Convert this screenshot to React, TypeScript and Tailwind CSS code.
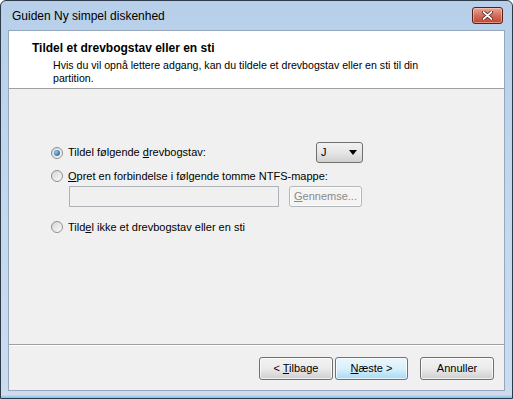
import React from 'react';

const FONT = { fontFamily: '"Liberation Sans", Arial, sans-serif' };

function Radio({ checked }: { checked?: boolean }) {
  return (
    <span className="relative flex h-[12px] w-[12px] shrink-0 items-center justify-center rounded-full border border-[#8e8f8f] bg-gradient-to-br from-[#d6d6d6] to-[#fbfbfb]">
      {checked && (
        <span className="h-[6px] w-[6px] rounded-full bg-[radial-gradient(circle_at_35%_35%,#8cc8ee,#164f80)]" />
      )}
    </span>
  );
}

function WinButton({ children, primary, disabled, className = '' }: { children: React.ReactNode; primary?: boolean; disabled?: boolean; className?: string }) {
  const tone = disabled
    ? 'border-[#b4b7ba] bg-[#f4f4f4] text-[#8a8a8a]'
    : primary
      ? 'border-[#3c7fb1] bg-gradient-to-b from-[#eaf6fd] via-[#d9f0fc] to-[#a7d9f5] text-black'
      : 'border-[#707070] bg-gradient-to-b from-[#f2f2f2] via-[#ebebeb] to-[#cfcfcf] text-black';
  return (
    <div className={`flex h-[23px] items-center justify-center rounded-[3px] border text-[11px] shadow-[inset_0_0_0_1px_rgba(255,255,255,0.7)] ${tone} ${className}`}>
      {children}
    </div>
  );
}

export default function App() {
  return (
    <div style={FONT} className="flex h-[399px] w-[513px] flex-col overflow-hidden rounded-t-[6px] border border-[#2d3a4a] bg-gradient-to-b from-[#b7cfe9] via-[#c3d8ee] to-[#cbdcf0]">
      {/* Title bar */}
      <div className="flex h-[29px] shrink-0 items-center justify-between pl-[11px] pr-[9px]">
        <span className="text-[12px] text-black">Guiden Ny simpel diskenhed</span>
        <div className="flex h-[17px] w-[31px] items-center justify-center rounded-[3px] border border-[#5a1f1a] bg-gradient-to-b from-[#e9a797] via-[#d36d5c] to-[#c2452f] shadow-[inset_0_0_0_1px_rgba(255,220,210,0.5)]">
          <svg width="11" height="9" viewBox="0 0 11 9">
            <path d="M1.5 1 L9.5 8 M9.5 1 L1.5 8" stroke="#4a1a14" strokeWidth="3.2" strokeLinecap="round" />
            <path d="M1.5 1 L9.5 8 M9.5 1 L1.5 8" stroke="#ffffff" strokeWidth="1.7" strokeLinecap="round" />
          </svg>
        </div>
      </div>

      {/* Client area */}
      <div className="mx-[7px] flex flex-1 flex-col border border-[#97a8bd] bg-[#f0f0f0]">
        {/* Header */}
        <div className="flex h-[58px] shrink-0 flex-col border-b border-[#a0a0a0] bg-white pl-[23px] pt-[10px] text-black">
          <div className="text-[12px] font-bold leading-[14px]">Tildel et drevbogstav eller en sti</div>
          <div className="mt-[4px] pl-[21px] text-[10.6px] leading-[13px]">
            Hvis du vil opnå lettere adgang, kan du tildele et drevbogstav eller en sti til din
            <br />
            partition.
          </div>
        </div>

        {/* Body */}
        <div className="flex flex-1 flex-col pl-[42px] pt-[53px] text-[11px] text-black">
          <div className="flex h-[21px] items-center">
            <Radio checked />
            <span className="ml-[5px] w-[248px]">
              Tildel følgende <u>d</u>revbogstav:
            </span>
            <div className="flex h-[21px] w-[47px] items-center justify-between rounded-[3px] border border-[#707070] bg-gradient-to-b from-[#f2f2f2] via-[#e6e6e6] to-[#d0d0d0] pl-[4px] pr-[5px]">
              <span>J</span>
              <svg width="8" height="5" viewBox="0 0 8 5">
                <path d="M0 0 H8 L4 5 Z" fill="#000" />
              </svg>
            </div>
          </div>
          <div className="mt-[6px] flex h-[14px] items-center">
            <Radio />
            <span className="ml-[5px]">
              <u>O</u>pret en forbindelse i følgende tomme NTFS-mappe:
            </span>
          </div>
          <div className="ml-[18px] mt-[3px] flex items-center">
            <div className="h-[21px] w-[210px] border border-[#afb3b7] bg-[#f0f0f0]" />
            <WinButton disabled className="ml-[10px] w-[73px] !h-[21px]">
              <span>
                <u>G</u>ennemse...
              </span>
            </WinButton>
          </div>
          <div className="mt-[13px] flex h-[14px] items-center">
            <Radio />
            <span className="ml-[5px]">
              Tild<u>e</u>l ikke et drevbogstav eller en sti
            </span>
          </div>
        </div>

        {/* Footer */}
        <div className="flex h-[46px] shrink-0 items-start border-t border-[#a0a0a0] pt-[12px] shadow-[inset_0_1px_0_#ffffff]">
          <div className="ml-auto flex">
            <WinButton className="w-[74px]">
              <span>
                &lt; <u>T</u>ilbage
              </span>
            </WinButton>
            <WinButton primary className="ml-[2px] w-[73px]">
              <span>
                <u>N</u>æste &gt;
              </span>
            </WinButton>
            <WinButton className="ml-[12px] mr-[10px] w-[74px]">
              <span>Annuller</span>
            </WinButton>
          </div>
        </div>
      </div>

      {/* Bottom frame */}
      <div className="h-[7px] shrink-0 bg-gradient-to-b from-[#cfd9ef] via-[#d3dcf0] to-[#73c6ef]" />
    </div>
  );
}
